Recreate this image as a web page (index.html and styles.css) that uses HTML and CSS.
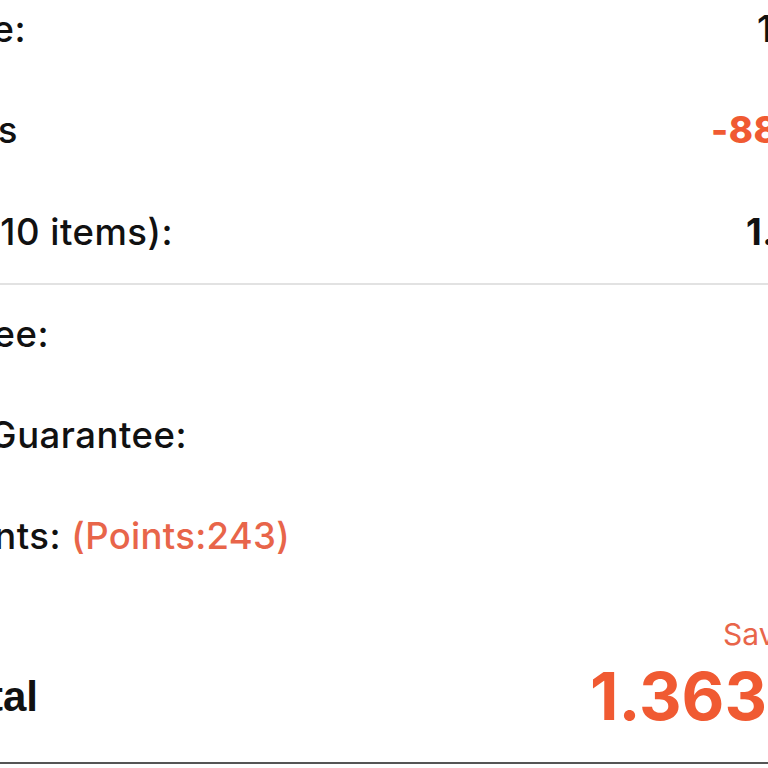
FILE: index.html
```html
<!DOCTYPE html>
<html lang="en">
<head>
<meta charset="utf-8">
<title>Order summary</title>
<link rel="stylesheet" href="styles.css">
</head>
<body>
<main class="summary">
  <section class="group">
    <div class="row r1">
      <span class="label"><span>Merchandise Price:</span></span>
      <span class="gap"></span>
      <span class="value">1.450.000đ</span>
    </div>
    <div class="row r2">
      <span class="label"><span>Vouchers</span></span>
      <span class="gap"></span>
      <span class="value discount">-88.000đ</span>
    </div>
    <div class="row r3">
      <span class="label"><span>Subtotal (10 items):</span></span>
      <span class="gap"></span>
      <span class="value strong">1.362.000đ</span>
    </div>
  </section>
  <section class="group">
    <div class="row r4 divided">
      <span class="label"><span>Shipping Fee:</span></span>
      <span class="gap"></span>
      <span class="value">0đ</span>
    </div>
    <div class="row r5">
      <span class="label"><span>Shipping Guarantee:</span></span>
      <span class="gap"></span>
      <span class="value">1.000đ</span>
    </div>
    <div class="row r6">
      <span class="label"><span>Use Points: <em class="points">(Points:243)</em></span></span>
      <span class="gap"></span>
      <span class="value"></span>
    </div>
  </section>
  <section class="total">
    <span class="label total-label"><span>Total</span></span>
    <span class="gap"></span>
    <div class="total-amount">
      <span class="saved">Saved 88.000đ</span>
      <span class="grand">1.363.000đ</span>
    </div>
  </section>
</main>
</body>
</html>
```
FILE: styles.css
```css
html, body {
  margin: 0;
  padding: 0;
  background: #ffffff;
}

body {
  width: 768px;
  height: 768px;
  overflow: hidden;
  font-family: Inter, "Noto Sans", "Liberation Sans", sans-serif;
  color: #111111;
}

.summary {
  margin-top: -22px;
  width: 768px;
}

.row {
  --label-end: 0px;
  --value-start: 768px;
  display: grid;
  grid-template-columns: var(--label-end) 1fr calc(768px - var(--value-start));
  align-items: center;
  box-sizing: border-box;
  height: 101.5px;
  font-size: 36.5px;
  font-weight: 500;
  letter-spacing: 0.5px;
}

.row.divided {
  border-top: 2px solid #e2e2e2;
}

.r1 { --label-end: 26px; --value-start: 757px; }
.r2 { --label-end: 18px; --value-start: 711px; }
.r3 { --label-end: 173px; --value-start: 746px; }
.r4 { --label-end: 49px; }
.r5 { --label-end: 187px; }
.r6 { --label-end: 290px; }

.label {
  display: flex;
  justify-content: flex-end;
  overflow: hidden;
  white-space: nowrap;
}

.value {
  overflow: hidden;
  white-space: nowrap;
}

.value.strong {
  font-weight: 700;
}

.value.discount {
  color: #f05a32;
  font-weight: 800;
}

.points {
  font-style: normal;
  font-weight: 500;
  letter-spacing: 0.3px;
  color: #e8654a;
}

.total {
  display: grid;
  grid-template-columns: 38px 1fr 178px;
  align-items: end;
  box-sizing: border-box;
  height: 177px;
  border-bottom: 2px solid #555555;
}

.total-label {
  font-family: "Liberation Sans", Arial, sans-serif;
  font-weight: 700;
  font-size: 42px;
  margin-bottom: 41px;
}

.total-amount {
  display: flex;
  flex-direction: column;
  white-space: nowrap;
  overflow: hidden;
  margin-bottom: 26px;
  color: #f05a32;
}

.saved {
  padding-left: 133px;
  font-size: 30px;
  font-weight: 400;
  color: #e8654a;
}

.grand {
  font-size: 66px;
  font-weight: 700;
  line-height: normal;
  margin-top: 4px;
}
```
